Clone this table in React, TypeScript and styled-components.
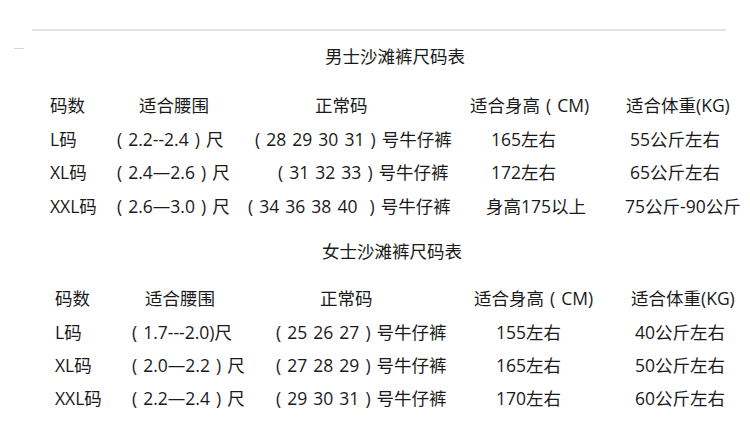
import React from "react";
import styled, { createGlobalStyle } from "styled-components";

const GlobalStyle = createGlobalStyle`
  html, body {
    margin: 0;
    padding: 0;
    background: #ffffff;
  }
  body {
    font-family: "Open Sans", "Noto Sans CJK SC", sans-serif;
    color: #1a1a1a;
  }
`;

const Page = styled.div`
  width: 750px;
  height: 442px;
  overflow: hidden;
  padding-top: 29px;
  box-sizing: border-box;
`;

const Rule = styled.div`
  height: 2px;
  width: 694px;
  margin-left: 32px;
  background: #e2e2e2;
`;

const TitleRow = styled.div<{ $top: number }>`
  display: flex;
  align-items: flex-start;
  margin-top: ${(p) => p.$top}px;
  height: 24px;
`;

const Dash = styled.div`
  width: 10px;
  height: 1px;
  margin: 4px 0 0 14px;
  background: #d8d8d8;
  flex: none;
`;

const Title = styled.div<{ $pad: number }>`
  flex: 1;
  padding-left: ${(p) => p.$pad}px;
  text-align: center;
  font-size: 17.5px;
  line-height: 24px;
  white-space: nowrap;
`;

const Table = styled.div<{ $left: number; $cols: string; $top: number; $row: number }>`
  display: grid;
  grid-template-columns: ${(p) => p.$cols};
  grid-auto-rows: ${(p) => p.$row}px;
  margin-left: ${(p) => p.$left}px;
  margin-top: ${(p) => p.$top}px;
`;

const Cell = styled.div<{ $indent?: number }>`
  display: flex;
  align-items: center;
  padding-left: ${(p) => p.$indent ?? 0}px;
  font-size: 17.5px;
  word-spacing: 1.5px;
  white-space: nowrap;
`;

type Row = [string, number][];

const menRows: Row[] = [
  [["码数", 0], ["适合腰围", 22], ["正常码", 67], ["适合身高 ( CM)", 0], ["适合体重(KG)", 1]],
  [["L码", 0], ["( 2.2--2.4 ) 尺", 0], ["( 28 29 30 31 ) 号牛仔裤", 7], ["165左右", 21], ["55公斤左右", 5]],
  [["XL码", 0], ["( 2.4—2.6 ) 尺", 0], ["( 31 32 33 ) 号牛仔裤", 30], ["172左右", 21], ["65公斤左右", 5]],
  [["XXL码", 0], ["( 2.6—3.0 ) 尺", 0], ["( 34 36 38 40\u00a0 ) 号牛仔裤", 0], ["身高175以上", 16], ["75公斤-90公斤", 0]],
];

const womenRows: Row[] = [
  [["码数", 0], ["适合腰围", 13], ["正常码", 44], ["适合身高 ( CM)", 0], ["适合体重(KG)", 0]],
  [["L码", 0], ["( 1.7---2.0)尺", 0], ["( 25 26 27 ) 号牛仔裤", 0], ["155左右", 22], ["40公斤左右", 4]],
  [["XL码", 0], ["( 2.0—2.2 ) 尺", 0], ["( 27 28 29 ) 号牛仔裤", 0], ["165左右", 22], ["50公斤左右", 4]],
  [["XXL码", 0], ["( 2.2—2.4 ) 尺", 0], ["( 29 30 31 ) 号牛仔裤", 0], ["170左右", 22], ["60公斤左右", 4]],
];

function SizeTable({ rows, left, cols, top, row }: { rows: Row[]; left: number; cols: string; top: number; row: number }) {
  return (
    <Table $left={left} $cols={cols} $top={top} $row={row}>
      {rows.flatMap((r, i) =>
        r.map(([text, indent], j) => (
          <Cell key={`${i}-${j}`} $indent={indent}>
            {text}
          </Cell>
        ))
      )}
    </Table>
  );
}

export default function App() {
  return (
    <>
      <GlobalStyle />
      <Page>
        <Rule />
        <TitleRow $top={13}>
          <Dash />
          <Title $pad={16}>男士沙滩裤尺码表</Title>
        </TitleRow>
        <SizeTable rows={menRows} left={50} cols="67px 131px 222px 155px 1fr" top={20} row={33.6} />
        <TitleRow $top={17}>
          <Title $pad={34}>女士沙滩裤尺码表</Title>
        </TitleRow>
        <SizeTable rows={womenRows} left={55} cols="77px 144px 198px 157px 1fr" top={18} row={33.2} />
      </Page>
    </>
  );
}
